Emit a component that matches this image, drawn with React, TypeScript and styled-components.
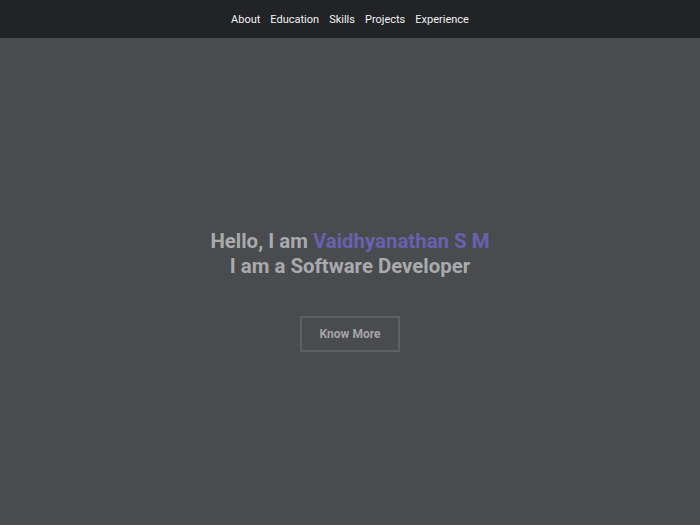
import React from "react";
import styled, { createGlobalStyle } from "styled-components";

const Global = createGlobalStyle`
  html, body { margin: 0; padding: 0; }
  body { background: #4a4b4f; font-family: Roboto, "Noto Sans", sans-serif; }
`;

const Page = styled.div`
  display: flex;
  flex-direction: column;
  height: 525px;
  background: #4a4b4f;
`;

const Nav = styled.nav`
  height: 38px;
  flex: none;
  background: #212326;
  display: flex;
  justify-content: center;
  align-items: center;
  gap: 10px;
`;

const NavLink = styled.a`
  color: #f2f2f2;
  font-size: 11px;
  text-decoration: none;
  cursor: pointer;
`;

const Hero = styled.main`
  flex: 1;
  display: flex;
  flex-direction: column;
  align-items: center;
  padding-top: 191px;
`;

const Title = styled.h1`
  margin: 0;
  font-size: 20.4px;
  line-height: 25px;
  font-weight: 700;
  color: #a9aaae;
  text-align: center;
`;

const Name = styled.span`
  color: #6a60b0;
`;

const Button = styled.button`
  margin-top: 37px;
  width: 100px;
  height: 36px;
  background: transparent;
  border: 2px solid #5e5f63;
  color: #a3a4a8;
  font-family: Roboto, sans-serif;
  font-weight: 700;
  font-size: 12px;
  cursor: pointer;
`;

export default function App() {
  const links = ["About", "Education", "Skills", "Projects", "Experience"];
  return (
    <Page>
      <Global />
      <Nav>
        {links.map((l) => (
          <NavLink key={l}>{l}</NavLink>
        ))}
      </Nav>
      <Hero>
        <Title>
          Hello, I am <Name>Vaidhyanathan S M</Name>
          <br />I am a Software Developer
        </Title>
        <Button>Know More</Button>
      </Hero>
    </Page>
  );
}
